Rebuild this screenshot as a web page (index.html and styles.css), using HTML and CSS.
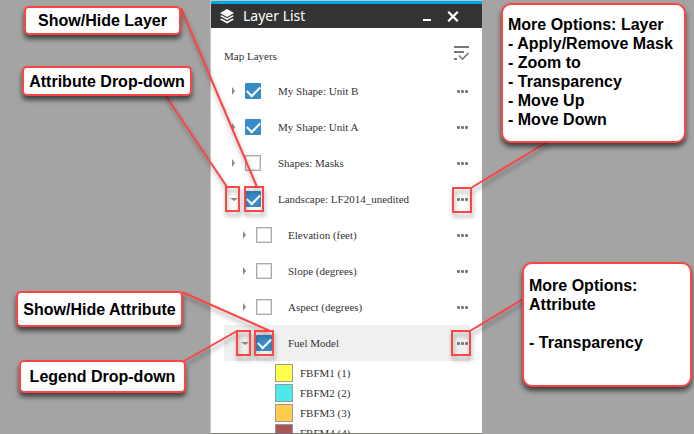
FILE: index.html
```html
<!DOCTYPE html>
<html lang="en">
<head>
<meta charset="utf-8">
<title>Layer List</title>
<link rel="stylesheet" href="styles.css">
</head>
<body>
<main class="stage">
  <section class="panel">
    <header class="titlebar">
      <svg class="logo" viewBox="0 0 14 15" aria-hidden="true">
        <path d="M7 0L14 4L7 8L0 4Z"/>
        <path d="M0 7L1.6 6.2L7 9.2L12.4 6.2L14 7L7 11Z"/>
        <path d="M0 10.4L1.6 9.6L7 12.6L12.4 9.6L14 10.4L7 14.6Z"/>
      </svg>
      <h1>Layer List</h1>
      <button class="win" aria-label="Minimize"><svg viewBox="0 0 12 12"><path d="M2 10H10" stroke-width="2"/></svg></button>
      <button class="win" aria-label="Close"><svg viewBox="0 0 12 12"><path d="M1.2 1.7L10.8 11.3M10.8 1.7L1.2 11.3" stroke-width="2.2"/></svg></button>
    </header>
    <div class="content">
      <div class="toolbar">
        <h2>Map Layers</h2>
        <button class="filter" aria-label="Layer options"><svg viewBox="0 0 16 16"><path d="M0 2H15M0 7H10M0 14H3" stroke-width="2"/><path d="M5 10.500L8.500 14L14.500 8" stroke-width="1.600"/></svg></button>
      </div>
      <ul class="layers">
        <li class="row"><button class="caret" aria-label="Expand"></button><input type="checkbox" id="l1" checked><label for="l1">My Shape: Unit B</label><button class="more" aria-label="More options"><i></i><i></i><i></i></button></li>
        <li class="row"><button class="caret" aria-label="Expand"></button><input type="checkbox" id="l2" checked><label for="l2">My Shape: Unit A</label><button class="more" aria-label="More options"><i></i><i></i><i></i></button></li>
        <li class="row"><button class="caret" aria-label="Expand"></button><input type="checkbox" id="l3"><label for="l3">Shapes: Masks</label><button class="more" aria-label="More options"><i></i><i></i><i></i></button></li>
        <li class="row"><button class="caret open" aria-label="Collapse"></button><input type="checkbox" id="l4" checked><label for="l4">Landscape: LF2014_unedited</label><button class="more" aria-label="More options"><i></i><i></i><i></i></button></li>
        <li class="row child"><button class="caret" aria-label="Expand"></button><input type="checkbox" id="l5"><label for="l5">Elevation (feet)</label><button class="more" aria-label="More options"><i></i><i></i><i></i></button></li>
        <li class="row child"><button class="caret" aria-label="Expand"></button><input type="checkbox" id="l6"><label for="l6">Slope (degrees)</label><button class="more" aria-label="More options"><i></i><i></i><i></i></button></li>
        <li class="row child"><button class="caret" aria-label="Expand"></button><input type="checkbox" id="l7"><label for="l7">Aspect (degrees)</label><button class="more" aria-label="More options"><i></i><i></i><i></i></button></li>
        <li class="row child selected"><button class="caret open" aria-label="Collapse"></button><input type="checkbox" id="l8" checked><label for="l8">Fuel Model</label><button class="more" aria-label="More options"><i></i><i></i><i></i></button></li>
      </ul>
      <ul class="legend">
        <li><span class="swatch yellow"></span>FBFM1 (1)</li>
        <li><span class="swatch cyan"></span>FBFM2 (2)</li>
        <li><span class="swatch orange"></span>FBFM3 (3)</li>
        <li><span class="swatch brown"></span>FBFM4 (4)</li>
      </ul>
    </div>
  </section>

  <svg class="pointers" width="694" height="434" viewBox="0 0 694 434" aria-hidden="true">
    <path d="M181 8L257 187M166 96L227 187M182 292L270 331M184 361L237 331M471 188L547 142M470 331L523 299"/>
    <rect x="245" y="187" width="18" height="24"/>
    <rect x="226" y="187" width="13" height="24"/>
    <rect x="255" y="331" width="18" height="24"/>
    <rect x="237" y="331" width="13" height="24"/>
    <rect x="453" y="188" width="18" height="24"/>
    <rect x="452" y="331" width="18" height="24"/>
  </svg>
  <p class="note show-layer">Show/Hide Layer</p>
  <p class="note attribute-drop">Attribute Drop-down</p>
  <p class="note show-attribute">Show/Hide Attribute</p>
  <p class="note legend-drop">Legend Drop-down</p>
  <div class="note wide layer-options">More Options: Layer<br>- Apply/Remove Mask<br>- Zoom to<br>- Transparency<br>- Move Up<br>- Move Down</div>
  <div class="note wide attribute-options">More Options:<br>Attribute<br><br>- Transparency</div>
</main>
</body>
</html>
```
FILE: styles.css
```css
* { box-sizing: border-box; }
body { margin: 0; background: #a4a4a4; }
h1, h2, p, ul { margin: 0; padding: 0; font-weight: normal; }
ul { list-style: none; }
button { padding: 0; border: 0; background: none; }

.stage {
  position: relative;
  display: grid;
  grid-template-columns: 210fr 272fr 212fr;
  height: 100vh;
  overflow: hidden;
}
.panel {
  grid-column: 2;
  display: flex;
  flex-direction: column;
  min-height: 0;
  overflow: hidden;
  border: solid #c9c7bb;
  border-width: 1px 0 1px 1px;
  border-bottom-color: #77776f;
  background: #fff;
  font-family: "Liberation Serif", serif;
  font-size: 11px;
  color: #333;
}
.titlebar {
  display: flex;
  flex: none;
  align-items: center;
  height: 27px;
  padding: 0 22px 0 9px;
  border-top: 3px solid #00a9e6;
  background: #333;
  color: #fff;
}
.logo { width: 14px; height: 15px; fill: #fff; }
h1 {
  flex: 1;
  margin-left: 9px;
  font: 14px/20px "Noto Sans", sans-serif;
}
.win { width: 14px; height: 12px; margin-left: 12px; }
.win svg { display: block; width: 12px; height: 12px; margin: auto; stroke: #fff; }

.content { flex: 1; min-height: 0; overflow: hidden; padding: 0 12px 0 13px; }
.toolbar {
  display: flex;
  justify-content: space-between;
  height: 45px;
  padding-top: 17px;
}
h2 { font-size: 11px; line-height: 22px; }
.filter { width: 16px; height: 16px; }
.filter svg { display: block; width: 16px; height: 16px; fill: none; stroke: #777; }

.row {
  display: flex;
  align-items: center;
  height: 36px;
  padding-left: 5px;
}
.row.child { padding-left: 16px; }
.row.selected { background: #f0f0f0; }
.row label { flex: 1; margin-left: 17px; white-space: nowrap; }
.row.child label { margin-left: 16px; }

.caret { display: grid; place-items: center; width: 9px; height: 16px; margin-right: 7px; }
.caret::before {
  content: "";
  border: solid transparent;
  border-width: 4px 0 4px 3px;
  border-left-color: #888;
}
.caret.open::before {
  border-width: 3px 4px 0;
  border-color: #888 transparent transparent;
}

input {
  display: grid;
  place-items: center;
  width: 16px;
  height: 16px;
  margin: 0;
  appearance: none;
  border: 1px solid #aaa;
  outline: 1px solid #ddd;
  outline-offset: -2px;
  background: #fff;
}
input:checked { border: 0; outline: 0; border-radius: 1px; background: #388bc6; }
input:checked::before {
  content: "";
  width: 11px;
  height: 6px;
  margin-bottom: 3px;
  border: solid #fff;
  border-width: 0 0 2px 2px;
  transform: rotate(-45deg);
}

.more { display: flex; gap: 1px; width: 13px; }
.more i { width: 3px; height: 3px; border-radius: 1px; background: #777; }

.legend { padding: 2px 0 0 51px; }
.legend li {
  display: flex;
  align-items: center;
  gap: 7px;
  height: 20px;
  white-space: nowrap;
}
.swatch { width: 18px; height: 18px; border: 1px solid #999; }
.yellow { background: #ffff4d; }
.cyan { background: #4de8e8; }
.orange { background: #ffcc4d; }
.brown { background: #a85757; }

.pointers {
  position: absolute;
  top: 0;
  left: 0;
  fill: none;
  stroke: #ff4444;
  stroke-width: 2;
  filter: drop-shadow(1px 4px 2px rgba(0, 0, 0, 0.35));
  pointer-events: none;
}
.note {
  position: absolute;
  display: grid;
  place-items: center;
  border: 2px solid #ff4444;
  border-radius: 5px;
  background: #fff;
  box-shadow: 0 4px 5px rgba(0, 0, 0, 0.6);
  font: bold 16px/19px "Liberation Sans", sans-serif;
  color: #000;
  white-space: nowrap;
}
.note.wide { display: block; padding: 10px 5px; border-radius: 10px; }
.show-layer { left: 24px; top: 6px; width: 157px; height: 29px; }
.attribute-drop { left: 22px; top: 66px; width: 170px; height: 30px; }
.show-attribute { left: 16px; top: 291px; width: 167px; height: 36px; }
.legend-drop { left: 19px; top: 360px; width: 167px; height: 33px; }
.layer-options { left: 501px; top: 3px; width: 185px; height: 140px; }
.note.attribute-options { left: 522px; top: 262px; width: 170px; height: 125px; padding-top: 12px; }
```
